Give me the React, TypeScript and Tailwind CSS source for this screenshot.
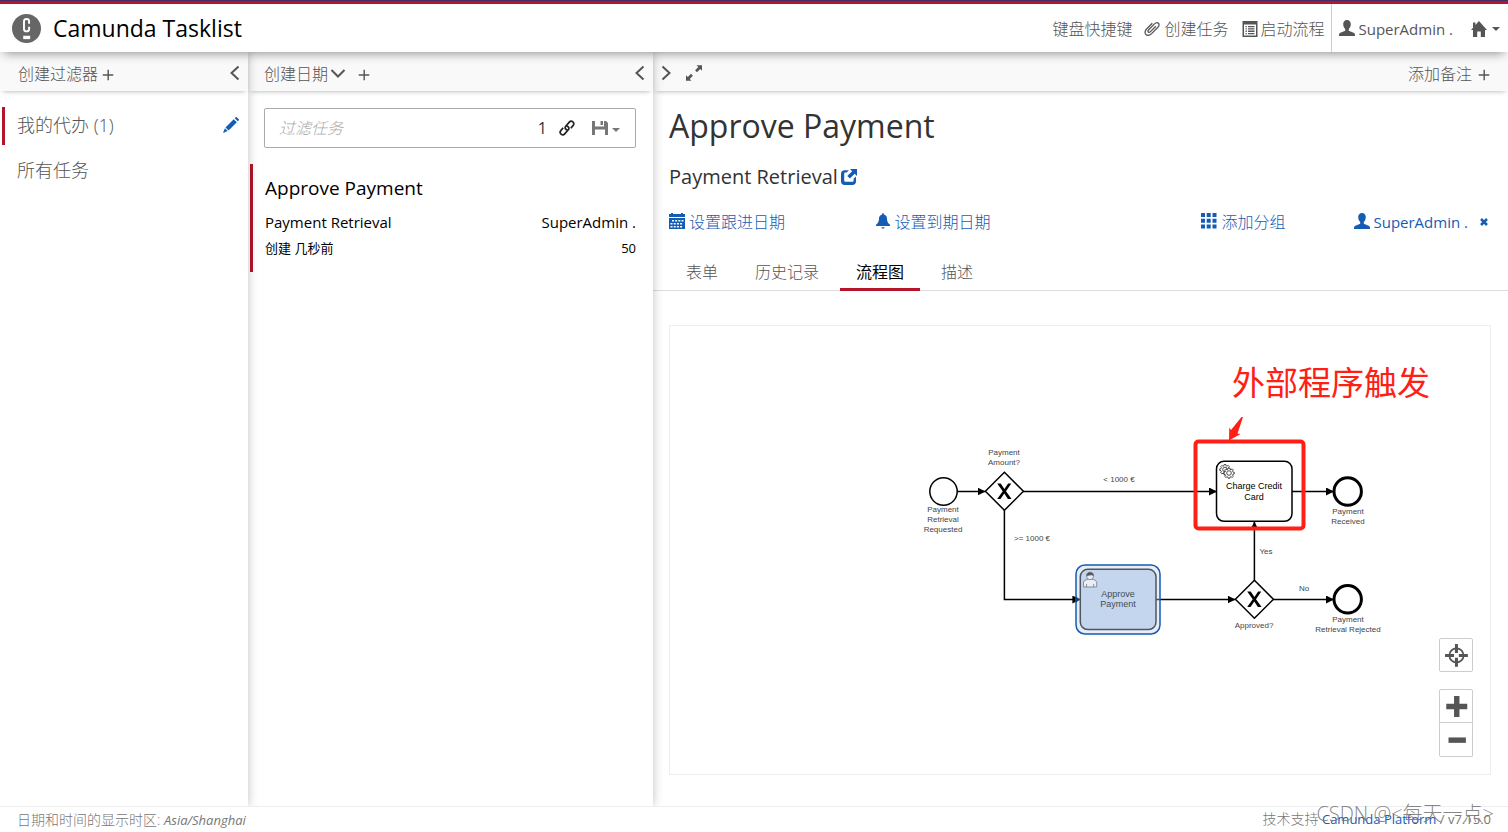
import type { ReactNode } from "react";

type IconProps = { className?: string; children: ReactNode };

const Icon = ({ className = "size-4", children }: IconProps) => (
  <svg viewBox="0 0 16 16" fill="currentColor" className={`shrink-0 ${className}`} aria-hidden="true">
    {children}
  </svg>
);

const UserIcon = () => (
  <Icon className="mb-0.5 size-4">
    <path d="M8 0C5.600 0 4.200 1.700 4.200 4c0 2 .8 4 2 5v1.700l-4.800 2C.5 13.100 0 13.900 0 15v1h16v-1c0-1.100-.5-1.900-1.400-2.300l-4.800-2V9c1.200-1 2-3 2-5 0-2.300-1.400-4-3.800-4z" />
  </Icon>
);

const PlusIcon = () => (
  <Icon className="mt-0.5 size-3">
    <path d="M7.300 1h1.900v6.100H15v1.900H9.200V15H7.300V9H1V7.100h6.300z" />
  </Icon>
);

const ChevronLeft = () => (
  <Icon className="mb-0.5 size-4">
    <path d="M11.500 1.500L4.500 8l7 6.500" fill="none" stroke="currentColor" strokeWidth="2" />
  </Icon>
);

const ChevronRight = () => (
  <Icon className="mb-0.5 size-4">
    <path d="M4.500 1.500L11.500 8l-7 6.500" fill="none" stroke="currentColor" strokeWidth="2" />
  </Icon>
);

const Caret = () => (
  <svg viewBox="0 0 8 4" fill="currentColor" className="h-1 w-2 shrink-0" aria-hidden="true">
    <path d="M0 0h8L4 4z" />
  </svg>
);

const Header = () => (
  <header className="relative z-30 flex h-[52px] shrink-0 items-center justify-between border-t-4 border-[#b5152b] bg-white shadow-[0_5px_10px_-4px_rgba(0,0,0,0.45)] before:absolute before:inset-x-0 before:-top-1 before:h-px before:bg-[#432d6b]">
    <a href="#" className="flex items-center gap-3 pl-3 text-[23px] text-black">
      <svg viewBox="0 0 30 30" className="size-[29px]" aria-hidden="true">
        <circle cx="15" cy="15" r="15" fill="#666" />
        <path
          d="M17.700 10V7.700c0-1.500-.9-2.500-2.600-2.500s-2.700 1-2.700 2.500v7.800c0 1.500 1 2.500 2.700 2.500s2.600-1 2.600-2.500v-2.300"
          fill="none"
          stroke="#fff"
          strokeWidth="2"
        />
        <path d="M11.600 22.500h7.200v3.500h-7.200z" fill="#fff" />
      </svg>
      Camunda Tasklist
    </a>
    <nav className="flex h-full items-center pt-0.5 text-base font-light">
      <a href="#" className="mr-3">键盘快捷键</a>
      <a href="#" className="mr-3.5 flex items-center gap-1">
        <Icon>
          <path
            d="M11.800 5.200l-5.300 5.400c-.7.7-1.700.9-2.200.4s-.4-1.500.4-2.300l5.800-5.800c1.300-1.300 2.900-1.600 3.900-.7s.8 2.700-.5 4l-6.300 6.400c-1.800 1.800-4.300 2.300-5.700.9s-1-3.900.9-5.700l5.500-5.500"
            fill="none"
            stroke="currentColor"
            strokeWidth="1.300"
          />
        </Icon>
        创建任务
      </a>
      <a href="#" className="mr-[7px] flex items-center gap-0.5">
        <Icon>
          <path d="M.5 0h15v16H.5zM2 3.500v11h12v-11z" fillRule="evenodd" />
          <path d="M3.500 5h1.300v1.300H3.500zM6 5h6.500v1.300H6zM3.500 7.300h1.300v1.300H3.500zM6 7.300h6.500v1.300H6zM3.500 9.600h1.300v1.300H3.500zM6 9.600h6.500v1.300H6zM3.500 11.900h1.300v1.300H3.500zM6 11.900h6.500v1.300H6z" />
        </Icon>
        启动流程
      </a>
      <a
        href="#"
        className="-mt-0.5 flex h-[48px] items-center gap-[3px] border-l border-[#ccc] pt-0.5 pl-[7px] text-[15px] font-normal"
      >
        <UserIcon />
        SuperAdmin .
      </a>
      <button type="button" aria-label="Home" className="mr-2 ml-[18px] flex items-center gap-[5px]">
        <Icon>
          <path d="M8 0l8 9h-2v7H9.800v-5.500H6.200V16H2V9H0l2-2.200V1.600h2.400v2.500z" />
        </Icon>
        <Caret />
      </button>
    </nav>
  </header>
);

const toolbar =
  "flex h-[39px] shrink-0 items-center bg-[#f9f9f9] pt-1 font-light shadow-[0_3px_5px_-3px_rgba(0,0,0,0.35)]";

const Filters = () => (
  <aside className="relative z-20 w-[248px] shrink-0 bg-white shadow-[0_0_10px_rgba(0,0,0,0.25)]">
    <div className={`${toolbar} justify-between pr-[5px] pl-[18px]`}>
      <button type="button" className="flex items-center gap-1">
        创建过滤器 <PlusIcon />
      </button>
      <button type="button" aria-label="Collapse filters"><ChevronLeft /></button>
    </div>
    <ul className="flex flex-col gap-[7px] pt-4 pl-0.5 text-lg font-light">
      <li className="flex h-[38px] items-center justify-between border-l-3 border-[#b5152b] pr-[9px] pb-0.5 pl-3">
        <a href="#">我的代办 (1)</a>
        <button type="button" aria-label="Edit filter" className="text-[#155cb5]">
          <Icon>
            <path d="M10.700 2.200l3.100 3.100-8.200 8.200-3.100-3.100zM11.700 1.200l1-1c.3-.3.7-.3 1 0l2.100 2.100c.3.3.3.7 0 1l-1 1zM1.900 11.300l2.800 2.800L0 16z" />
          </Icon>
        </button>
      </li>
      <li className="flex h-[38px] items-center border-l-3 border-transparent pb-0.5 pl-3">
        <a href="#">所有任务</a>
      </li>
    </ul>
  </aside>
);

const TaskList = () => (
  <section className="relative z-10 w-[405px] shrink-0 bg-white shadow-[0_0_10px_rgba(0,0,0,0.25)]">
    <div className={`${toolbar} pr-[5px] pl-4`}>
      <button type="button" className="flex items-center gap-0.5">
        创建日期
        <Icon>
          <path d="M1.500 4L8 10.500 14.500 4" fill="none" stroke="currentColor" strokeWidth="2" />
        </Icon>
      </button>
      <button type="button" aria-label="Add sorting" className="ml-3"><PlusIcon /></button>
      <button type="button" aria-label="Collapse tasks" className="ml-auto"><ChevronLeft /></button>
    </div>
    <div className="mt-[17px] mr-[17px] ml-4 flex h-10 items-center rounded-xs border border-[#aaa] pr-[15px] pl-3.5">
      <input
        type="text"
        aria-label="过滤任务"
        placeholder="过滤任务"
        className="min-w-0 flex-1 font-light outline-none placeholder:text-[#aaa] placeholder:italic"
      />
      <span className="text-[#333]">1</span>
      <button type="button" aria-label="Copy link" className="ml-3 text-[#222]">
        <Icon>
          <g fill="none" stroke="currentColor" strokeWidth="1.700">
            <path d="M8.800 10.200C6.800 10.100 5.300 7.800 6.700 6.200l3.600-4.100c1-1.100 2.500-1.100 3.600-.2s1.200 2.400.3 3.500l-2.400 2.800" />
            <path d="M7.200 5.800c2 .1 3.500 2.400 2.100 4l-3.600 4.100c-1 1.100-2.500 1.100-3.600.2s-1.200-2.400-.3-3.500l2.400-2.800" />
          </g>
        </Icon>
      </button>
      <button type="button" aria-label="Save search" className="ml-[17px] flex items-center gap-1 text-[#777]">
        <Icon>
          <path d="M0 1h3v5.500h9V1h2l2 2v12h-3V9.500H3V15H0zM8.500 1H11v4H8.500z" />
        </Icon>
        <span className="pt-1"><Caret /></span>
      </button>
    </div>
    <a href="#" className="mt-4 ml-0.5 block h-[108px] border-l-3 border-[#b5152b] pt-2.5 pr-[17px] pl-3 text-black">
      <h4 className="text-[19px] leading-7 font-normal">Approve Payment</h4>
      <div className="mt-2 flex justify-between text-[15px] leading-6">
        <span>Payment Retrieval</span>
        <span>SuperAdmin .</span>
      </div>
      <div className="mt-1 flex justify-between text-[13px] leading-5">
        <span>创建 几秒前</span>
        <span>50</span>
      </div>
    </a>
  </section>
);

const Gateway = ({ x, y }: { x: number; y: number }) => (
  <g transform={`translate(${x} ${y})`}>
    <path d="M0-19L19 0 0 19-19 0z" fill="#fff" stroke="#000" strokeWidth="1.500" />
    <path d="M-7.200-7.700h3.500L0-2.300 3.700-7.700h3.200L1.600 0 7.200 7.700H3.500L-.1 2.300-3.900 7.700h-3.300L-1.700 0z" />
  </g>
);

type LabelProps = { x: number; y: number; lines: string[] };

const Label = ({ x, y, lines }: LabelProps) => (
  <text textAnchor="middle" fontSize="8" fill="#444">
    {lines.map((line, i) => (
      <tspan key={line} x={x} y={y + i * 10}>
        {line}
      </tspan>
    ))}
  </text>
);

const gear =
  "M-.8-5h1.600l.3 1.300.9.4 1.200-.8 1.100 1.100-.7 1.200.4.900 1.300.3v1.500l-1.300.3-.4.900.7 1.200-1.100 1.100-1.200-.7-.9.300-.3 1.300h-1.600l-.3-1.300-.9-.3-1.200.7-1.100-1.100.7-1.200-.4-.9-1.300-.3v-1.500l1.300-.3.4-.9-.7-1.200 1.100-1.100 1.200.8.9-.4z";

const Diagram = () => (
  <svg
    viewBox="670 326 820 448"
    className="h-full w-full"
    fontFamily="'Liberation Sans', Arial, sans-serif"
    role="img"
    aria-label="Payment Retrieval"
  >
    <defs>
      <marker id="arrow" viewBox="0 0 8 8" refX="8" refY="4" markerWidth="8" markerHeight="8" markerUnits="userSpaceOnUse" orient="auto">
        <path d="M0 0l8 4-8 4z" />
      </marker>
    </defs>
    <g fill="none" stroke="#000" strokeWidth="1.500">
      <path d="M957 491.500h28.500" markerEnd="url(#arrow)" />
      <path d="M1023 491.500h194" markerEnd="url(#arrow)" />
      <path d="M1004.400 510v89.500h76" markerEnd="url(#arrow)" />
      <path d="M1156 599.500h79.500" markerEnd="url(#arrow)" />
      <path d="M1254.400 581v-59.500" markerEnd="url(#arrow)" />
      <path d="M1273 599.500h61" markerEnd="url(#arrow)" />
      <path d="M1292 491.500h42" markerEnd="url(#arrow)" />
    </g>
    <circle cx="943.500" cy="491.500" r="13.700" fill="#fff" stroke="#000" strokeWidth="1.500" />
    <circle cx="1347.700" cy="491.500" r="13.700" fill="#fff" stroke="#000" strokeWidth="3" />
    <circle cx="1347.700" cy="599.300" r="13.700" fill="#fff" stroke="#000" strokeWidth="3" />
    <Gateway x={1004.400} y={491.300} />
    <Gateway x={1254.400} y={599.300} />

    <rect x="1216.500" y="461.300" width="75.500" height="60" rx="7.500" fill="#fff" stroke="#000" strokeWidth="1.500" />
    <g fill="#fff" stroke="#222" strokeWidth=".8">
      <g transform="translate(1225 469.500)">
        <path d={gear} />
        <circle r="2.300" />
      </g>
      <g transform="translate(1229 473)">
        <path d={gear} />
        <circle r="2.300" />
      </g>
    </g>
    <text textAnchor="middle" fontSize="9">
      <tspan x="1254" y="489">Charge Credit</tspan>
      <tspan x="1254" y="500">Card</tspan>
    </text>

    <rect x="1076" y="565" width="84" height="69" rx="9" fill="#e7eef8" stroke="#155cb5" strokeWidth="1.500" />
    <path d="M1076 599.500h4M1156 599.500h4" stroke="#334f78" strokeWidth="1.500" />
    <path d="M1076 596.500l4 3-4 3z" fill="#123f7c" />
    <rect x="1080.300" y="569.300" width="75.700" height="60.300" rx="7.500" fill="#c4d6ee" stroke="#50565f" strokeWidth="1.500" />
    <g fill="#e7eef8" stroke="#777" strokeWidth=".8">
      <path d="M1083.500 587v-4.500c0-2 2.500-2.800 4.600-3.300h4c2.100.5 4.600 1.300 4.600 3.300v4.500z" />
      <path d="M1086.500 587v-3M1093.700 587v-3" />
      <circle cx="1090" cy="576.200" r="3.500" />
      <path d="M1086.600 576c-.5-5 7.400-5 6.900-.3-1.500-1.600-4.500-.5-6.900.3z" fill="#4c5057" />
    </g>
    <text textAnchor="middle" fontSize="9" fill="#444a55">
      <tspan x="1118" y="597">Approve</tspan>
      <tspan x="1118" y="607">Payment</tspan>
    </text>

    <Label x={1004} y={455} lines={["Payment", "Amount?"]} />
    <Label x={943} y={512} lines={["Payment", "Retrieval", "Requested"]} />
    <Label x={1119} y={482} lines={["< 1000 €"]} />
    <Label x={1032} y={541} lines={[">= 1000 €"]} />
    <Label x={1266} y={554} lines={["Yes"]} />
    <Label x={1304} y={591} lines={["No"]} />
    <Label x={1254} y={628} lines={["Approved?"]} />
    <Label x={1348} y={514} lines={["Payment", "Received"]} />
    <Label x={1348} y={622} lines={["Payment", "Retrieval Rejected"]} />

    <rect x="1195.500" y="441.500" width="108" height="87" rx="3" fill="none" stroke="#ff2015" strokeWidth="4" />
    <path d="M1243 417l-5.500 16.500 3 .5-11.500 6.500.3-13 1.700 2.500L1241.500 417z" fill="#ff2015" />
    <text x="1232" y="395" fontSize="33" fill="#ff2015" fontFamily="'Noto Sans CJK SC', sans-serif">
      外部程序触发
    </text>
  </svg>
);

const tabs = ["表单", "历史记录", "流程图", "描述"];

const zoomButton = "flex size-[34px] items-center justify-center border border-[#ccc] bg-white text-[#555]";

const TaskView = () => (
  <section className="flex min-w-0 flex-1 flex-col bg-white">
    <div className={`${toolbar} pr-[18px] pl-[5px]`}>
      <button type="button" aria-label="Expand"><ChevronRight /></button>
      <button type="button" aria-label="Full screen" className="ml-3">
        <Icon className="mb-0.5 size-4">
          <path d="M10.500.3H16v5.500l-1.800-1.800-3.200 3.200-1.900-1.900 3.200-3.200zM5.500 15.700H0v-5.500L1.800 12 5 8.800l1.900 1.900-3.200 3.200z" />
        </Icon>
      </button>
      <button type="button" className="ml-auto flex items-center gap-1.5">
        添加备注 <PlusIcon />
      </button>
    </div>
    <div className="pt-3 pr-[17px] pl-4 text-[#333]">
      <h2 className="text-[32px] leading-[46px] font-normal">Approve Payment</h2>
      <h3 className="mt-3.5 flex items-center gap-[3px] text-xl leading-7">
        Payment Retrieval
        <a href="#" aria-label="Open process" className="text-[#155cb5]">
          <Icon>
            <path d="M9 0h7v7l-2.300-2.300-4.800 4.800-2.600-2.600 4.900-4.700zM7.800 1.200L5.800 3.400H4.500c-.8 0-1.300.5-1.300 1.300v6.800c0 .8.500 1.300 1.300 1.300h6.800c.8 0 1.300-.5 1.300-1.300v-1.700L15 7.500V12.500c0 2-1.500 3.500-3.500 3.500h-8C1.500 16 0 14.500 0 12.500V4.700c0-2 1.500-3.500 3.500-3.500z" />
          </Icon>
        </a>
      </h3>
      <div className="mt-[19px] grid grid-cols-4 leading-6 font-light text-[#155cb5]">
        <button type="button" className="flex items-center gap-1">
          <Icon className="mb-0.5 size-4">
            <path d="M0 1h2V0h2v1h8V0h2v1h2v3H0zM0 5h16v11H0zM3 7v1.500h2V7zM6.200 7v1.500h2V7zM9.400 7v1.500h2V7zM12.500 7v1.500h2V7zM1.500 10v1.500h2V10zM4.700 10v1.500h2V10zM7.900 10v1.500h2V10zM11.100 10v1.500h2V10zM1.500 13v1.500h2V13zM4.700 13v1.500h2V13zM7.900 13v1.500h2V13zM11.100 13v1.500h2V13z" fillRule="evenodd" />
          </Icon>
          设置跟进日期
        </button>
        <button type="button" className="flex items-center gap-1">
          <Icon className="mb-0.5 size-4">
            <path d="M7.200.8c0-1 1.600-1 1.600 0v.7c2 .4 3.200 2 3.200 4 0 3 .8 4.500 3 6.300V13H1v-1.200c2.200-1.800 3-3.300 3-6.300 0-2 1.200-3.600 3.200-4zM6.300 14.300h3.400c-.3 1.800-3.100 1.800-3.400 0z" />
          </Icon>
          设置到期日期
        </button>
        <button type="button" className="flex items-center justify-end gap-1">
          <Icon className="mb-0.5 size-4">
            <path d="M0 0h4v4H0zM5.700 0h4v4h-4zM11.500 0h4v4h-4zM0 5.700h4v4H0zM5.700 5.700h4v4h-4zM11.500 5.700h4v4h-4zM0 11.500h4v4H0zM5.700 11.500h4v4h-4zM11.500 11.500h4v4h-4z" />
          </Icon>
          添加分组
        </button>
        <div className="flex items-center justify-end pr-[3px] text-[15px] font-normal">
          <button type="button" className="flex items-center gap-[3px]">
            <UserIcon />
            SuperAdmin .
          </button>
          <button type="button" aria-label="Remove assignee" className="ml-3">
            <Icon className="size-2">
              <path d="M2 2l12 12M14 2L2 14" stroke="currentColor" strokeWidth="5" />
            </Icon>
          </button>
        </div>
      </div>
    </div>
    <div role="tablist" className="mt-5 flex h-[37px] gap-[5px] border-b border-[#ddd] pl-[17px]">
      {tabs.map((tab) => (
        <button
          key={tab}
          type="button"
          role="tab"
          aria-selected={tab === "流程图"}
          className={
            tab === "流程图"
              ? "-mb-px border-b-3 border-[#b5152b] px-4 pt-0.5 text-black"
              : "-mb-px border-b-3 border-transparent px-4 pt-0.5 font-light"
          }
        >
          {tab}
        </button>
      ))}
    </div>
    <div className="relative mt-[34px] mr-[17px] mb-[31px] ml-4 min-h-0 flex-1 border border-[#eee]">
      <Diagram />
      <div className="absolute right-[17px] bottom-[17px] flex flex-col">
        <button type="button" aria-label="Reset zoom" className={`${zoomButton} mb-[17px] rounded-xs`}>
          <Icon className="size-6">
            <circle cx="8.300" cy="8.300" r="4.700" fill="none" stroke="currentColor" strokeWidth="1.200" />
            <path d="M7.300.7h2v6h-2zM7.300 9.900h2v6h-2zM.7 7.300h6v2h-6zM9.900 7.300h6v2h-6z" />
          </Icon>
        </button>
        <button type="button" aria-label="Zoom in" className={`${zoomButton} rounded-t-xs`}>
          <Icon className="size-6">
            <path d="M6.700 1.300h3.600v5.200h5.200v3.600h-5.200v5.200H6.700v-5.200H1.500V6.500h5.200z" />
          </Icon>
        </button>
        <button type="button" aria-label="Zoom out" className={`${zoomButton} rounded-b-xs border-t-0`}>
          <Icon className="size-6">
            <path d="M3 6.300h11.600v3.600H3z" />
          </Icon>
        </button>
      </div>
    </div>
  </section>
);

const Footer = () => (
  <footer className="relative z-30 flex h-[26px] shrink-0 items-center justify-between border-t border-[#eee] bg-white px-[17px] text-[13px] text-[#777]">
    <span className="text-sm font-light">
      日期和时间的显示时区: <em className="text-[13px] font-normal">Asia/Shanghai</em>
    </span>
    <span>
      <span className="text-sm font-light">技术支持</span>{" "}
      <a href="#" className="text-[#155cb5]">
        Camunda Platform
      </a>{" "}
      / v7.15.0
    </span>
    <span className="absolute right-3.5 bottom-1.5 text-xl leading-6 font-light text-[#777]/90">
      CSDN @&lt;每天一点&gt;
    </span>
  </footer>
);

const App = () => {
  return (
    <div className="flex h-screen flex-col overflow-hidden bg-white font-['Open_Sans','Noto_Sans_CJK_SC',sans-serif] text-base font-normal text-[#555]">
      <Header />
      <main className="flex min-h-0 flex-1">
        <Filters />
        <TaskList />
        <TaskView />
      </main>
      <Footer />
    </div>
  );
};

export default App;
